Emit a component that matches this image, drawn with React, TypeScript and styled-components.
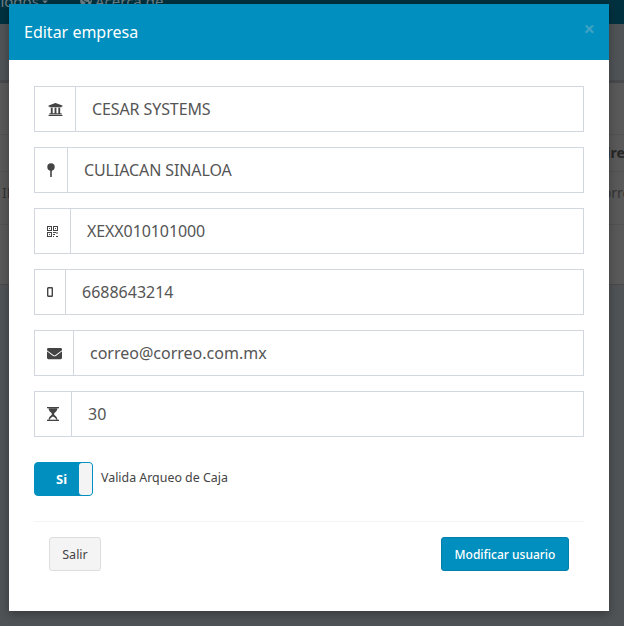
import { ReactNode } from 'react';
import styled, { createGlobalStyle } from 'styled-components';
import { FaCaretDown, FaEnvelope, FaGlobeAmericas, FaUniversity } from 'react-icons/fa';

const GlobalStyle = createGlobalStyle`
  html, body {
    margin: 0;
    padding: 0;
    background: #4f5356;
    font-family: 'Noto Sans', 'Open Sans', sans-serif;
    overflow: hidden;
  }
`;

const PinIcon = () => (
  <svg width="8" height="14" viewBox="0 0 8 14">
    <circle cx="4" cy="4" r="3.7" fill="#444" />
    <rect x="3.2" y="7" width="1.6" height="7" fill="#444" />
  </svg>
);

const QrIcon = () => (
  <svg width="11" height="11" viewBox="0 0 11 11" fill="none" stroke="#444">
    <rect x="0.5" y="0.5" width="4" height="4" />
    <rect x="6.5" y="0.5" width="4" height="4" />
    <rect x="0.5" y="6.5" width="4" height="4" />
    <path d="M2 2.5h1M8 2.5h1M2 8.5h1" />
    <path d="M6 6.5h3M10 6v2M6 8.5h2M6 10.5h1M9 10.5h2" />
  </svg>
);

const PhoneIcon = () => (
  <svg width="6" height="10" viewBox="0 0 6 10" fill="none" stroke="#444">
    <rect x="0.7" y="0.7" width="4.6" height="8.6" rx="0.6" strokeWidth="1.4" />
  </svg>
);

const HourglassIcon = () => (
  <svg width="12" height="14" viewBox="0 0 12 14" fill="#444">
    <rect x="0" y="0" width="12" height="1.3" />
    <rect x="0" y="12.7" width="12" height="1.3" />
    <path d="M1.6 1.3h8.8C10.4 4.4 7.6 5.4 6.9 7c.7 1.6 3.5 2.6 3.5 5.7H9.2C9 11 7 9.7 6 9.4 5 9.7 3 11 2.8 12.7H1.6C1.6 9.6 4.4 8.6 5.1 7 4.4 5.4 1.6 4.4 1.6 1.3z" />
  </svg>
);

const Page = styled.div`
  height: 626px;
  position: relative;
  overflow: hidden;
  background: #4f5356;
`;

const TopBar = styled.div`
  height: 24px;
  background: #00313f;
  display: flex;
  color: #6f7f86;
  font-size: 15px;
  line-height: 2px;
  overflow: hidden;
`;

const TopItem = styled.span<{ $width: number; $offset?: number }>`
  width: ${(p) => p.$width}px;
  margin-left: ${(p) => p.$offset ?? 0}px;
  height: 2px;
  flex: none;
  display: flex;
  align-items: center;
  gap: 3px;
`;

const BackTitle = styled.div`
  height: 56px;
  border-bottom: 3px solid #47494b;
`;

const BackPanel = styled.div`
  height: 201px;
  background: #595959;
  border-bottom: 1px solid #4a4a4a;
  display: flex;
  flex-direction: column;
`;

const BackRow = styled.div<{ $height: number; $line?: number }>`
  height: ${(p) => p.$height}px;
  width: 700px;
  border-bottom: 1px solid #525252;
  display: grid;
  grid-template-columns: 594px auto;
  font-size: 14px;
  line-height: ${(p) => p.$line ?? 36}px;
`;

const BackCell = styled.span<{ $bold?: boolean }>`
  grid-column: ${(p) => (p.$bold ? 2 : 'auto')};
  font-weight: ${(p) => (p.$bold ? 700 : 400)};
  color: ${(p) => (p.$bold ? '#262626' : '#333')};
  padding-left: 2px;
`;

const Modal = styled.div`
  position: absolute;
  left: 9px;
  top: 4px;
  width: 600px;
  height: 607px;
  background: #fff;
  box-shadow: 0 3px 9px rgba(0, 0, 0, 0.3);
`;

const ModalHeader = styled.div`
  height: 56px;
  background: #008fbe;
  display: flex;
  align-items: center;
  justify-content: space-between;
  padding: 0 14px 0 15px;
  color: #fff;
`;

const ModalTitle = styled.h4`
  margin: 0;
  font-size: 16px;
  font-weight: 400;
`;

const CloseButton = styled.span`
  font-size: 20px;
  font-weight: 700;
  color: #3fa3c6;
  line-height: 1;
  margin-bottom: 6px;
`;

const ModalBody = styled.div`
  padding: 26px 25px 0;
  display: flex;
  flex-direction: column;
`;

const Fields = styled.div`
  display: flex;
  flex-direction: column;
  gap: 15px;
`;

const InputGroup = styled.div`
  display: flex;
  height: 46px;
  box-sizing: border-box;
  border: 1px solid #d2d6de;
`;

const Addon = styled.span<{ $width: number }>`
  width: ${(p) => p.$width}px;
  box-sizing: border-box;
  flex: none;
  display: flex;
  align-items: center;
  justify-content: center;
  border-right: 1px solid #d2d6de;
  color: #444;
  font-size: 15px;
`;

const Input = styled.input<{ $caps?: boolean }>`
  flex: 1;
  min-width: 0;
  border: 0;
  outline: 0;
  padding: 0 16px;
  font-family: inherit;
  font-size: 16px;
  letter-spacing: ${(p) => (p.$caps ? '-0.1px' : '0')};
  color: #555;
  background: transparent;
`;

const SwitchRow = styled.div`
  display: flex;
  align-items: flex-start;
  gap: 8px;
  margin-top: 25px;
`;

const Switch = styled.div`
  width: 59px;
  height: 34px;
  box-sizing: border-box;
  border: 1px solid #008fbe;
  border-radius: 4px;
  background: #008fbe;
  display: flex;
  overflow: hidden;
`;

const SwitchOn = styled.span`
  flex: 1;
  display: flex;
  align-items: center;
  justify-content: center;
  padding-left: 9px;
  color: #fff;
  font-size: 13px;
  font-weight: 700;
`;

const SwitchHandle = styled.span`
  width: 13px;
  background: #f4f4f4;
  border-radius: 3px 0 0 3px;
`;

const SwitchLabel = styled.label`
  font-size: 12.4px;
  line-height: 20px;
  margin-top: 6px;
  color: #444;
`;

const Footer = styled.div`
  margin-top: 25px;
  border-top: 1px solid #f4f4f4;
  padding: 15px 15px 0;
  display: flex;
  justify-content: space-between;
`;

const Button = styled.button<{ $primary?: boolean }>`
  height: 34px;
  min-width: ${(p) => (p.$primary ? 128 : 52)}px;
  padding: 0 12px;
  box-sizing: border-box;
  border-radius: 3px;
  font-family: inherit;
  font-size: ${(p) => (p.$primary ? 12 : 12.5)}px;
  font-weight: ${(p) => (p.$primary ? 500 : 400)};
  border: 1px solid ${(p) => (p.$primary ? '#0080aa' : '#ddd')};
  background: ${(p) => (p.$primary ? '#008fbe' : '#f4f4f4')};
  color: ${(p) => (p.$primary ? '#fff' : '#444')};
`;

const fields: { icon: ReactNode; width: number; value: string; caps?: boolean }[] = [
  { icon: <FaUniversity />, width: 41, value: 'CESAR SYSTEMS', caps: true },
  { icon: <PinIcon />, width: 33, value: 'CULIACAN SINALOA', caps: true },
  { icon: <QrIcon />, width: 36, value: 'XEXX010101000', caps: true },
  { icon: <PhoneIcon />, width: 31, value: '6688643214' },
  { icon: <FaEnvelope />, width: 39, value: 'correo@correo.com.mx' },
  { icon: <HourglassIcon />, width: 37, value: '30' },
];

const App = () => {
  return (
    <Page>
      <GlobalStyle />
      <TopBar>
        <TopItem $width={56} $offset={-8}>
          alogos <FaCaretDown size={9} />
        </TopItem>
        <TopItem $width={90} $offset={32}>
          <FaGlobeAmericas size={12} /> Acerca de
        </TopItem>
      </TopBar>
      <BackTitle />
      <BackPanel>
        <BackRow $height={51} />
        <BackRow $height={36} $line={36}>
          <BackCell $bold>Dirección</BackCell>
        </BackRow>
        <BackRow $height={52} $line={42}>
          <BackCell>INICIO</BackCell>
          <BackCell>correo</BackCell>
        </BackRow>
      </BackPanel>
      <Modal>
        <ModalHeader>
          <ModalTitle>Editar empresa</ModalTitle>
          <CloseButton>×</CloseButton>
        </ModalHeader>
        <ModalBody>
          <Fields>
            {fields.map((f) => (
              <InputGroup key={f.value}>
                <Addon $width={f.width}>{f.icon}</Addon>
                <Input value={f.value} $caps={f.caps} readOnly />
              </InputGroup>
            ))}
          </Fields>
          <SwitchRow>
            <Switch>
              <SwitchOn>Si</SwitchOn>
              <SwitchHandle />
            </Switch>
            <SwitchLabel>Valida Arqueo de Caja</SwitchLabel>
          </SwitchRow>
          <Footer>
            <Button>Salir</Button>
            <Button $primary>Modificar usuario</Button>
          </Footer>
        </ModalBody>
      </Modal>
    </Page>
  );
};

export default App;
